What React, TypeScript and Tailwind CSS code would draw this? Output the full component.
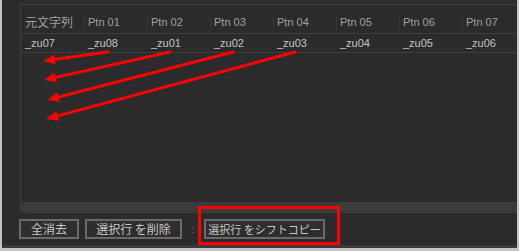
import React from "react";

const cols = ["元文字列", "Ptn 01", "Ptn 02", "Ptn 03", "Ptn 04", "Ptn 05", "Ptn 06", "Ptn 07"];
const row = ["_zu07", "_zu08", "_zu01", "_zu02", "_zu03", "_zu04", "_zu05", "_zu06"];

const font = { fontFamily: '"Liberation Sans", "Noto Sans CJK JP", sans-serif' };
const jp = { fontFamily: '"Noto Sans CJK JP", sans-serif' };

function Btn({ children, w, size }: { children: React.ReactNode; w: string; size: string }) {
  return (
    <div
      className={`${w} ${size} h-[20px] border-2 border-[#6a6a6a] bg-[#2e2e2e] text-[#c8c8c8] leading-none flex items-center justify-center whitespace-nowrap overflow-hidden`}
      style={jp}
    >
      {children}
    </div>
  );
}

export default function App() {
  const arrows = [
    [108, 52, 43, 61],
    [170, 52, 44, 80],
    [233, 52, 47, 100],
    [295, 52, 46, 119],
  ];
  return (
    <div className="relative w-[519px] h-[251px] bg-[#c4c4c4] pl-[2px] pr-[2px] pb-[3px]" style={font}>
      <div className="w-full h-full bg-[#2b2b2b] flex flex-col overflow-hidden">
        <div className="pt-[4px] pl-[18px] h-[213px] flex">
          <div className="flex-1 min-w-0 flex flex-col border-l border-t border-[#3e3e3e] overflow-hidden">
            <div className="h-[29px] flex border-b border-[#3e3e3e]">
              {cols.map((c, i) => (
                <div key={i} className="w-[63px] shrink-0 flex items-center pt-[6px] pl-[4px] relative text-[#a0a0a0]">
                  <span className={i === 0 ? "text-[12px]" : "text-[11px]"} style={i === 0 ? jp : font}>{c}</span>
                  {i > 0 && <div className="absolute left-0 top-[10px] h-[16px] w-px bg-[#363636]" />}
                </div>
              ))}
            </div>
            <div className="h-[19px] flex border-b border-[#3e3e3e]">
              {row.map((c, i) => (
                <div key={i} className="w-[63px] shrink-0 flex items-center pl-[4px] text-[11px] text-[#c4c4c4]">
                  {c}
                </div>
              ))}
            </div>
            <div className="flex-1" />
            <div className="h-[11px] bg-[#3b3b3b] rounded-l-[5px]" />
          </div>
        </div>
        <div className="pl-[17px] pt-[6px] flex items-center">
          <Btn w="w-[60px]" size="text-[12px]">全消去</Btn>
          <div className="w-[6px]" />
          <Btn w="w-[97px]" size="text-[12px]">選択行 を削除</Btn>
          <div className="w-[22px] text-[#777] text-[11px] flex justify-center">:</div>
          <Btn w="w-[121px]" size="text-[11px]">選択行 をシフトコピー</Btn>
        </div>
        <div className="flex-1" />
        <div className="h-[3px] bg-[#3a3a3a]" />
      </div>
      <div className="absolute left-[198px] top-[206px] w-[142px] h-[39px] border-[3px] border-[#ff0000]" />
      <svg className="absolute left-0 top-0" width="519" height="251">
        {arrows.map(([x1, y1, x2, y2], i) => {
          const dx = x2 - x1, dy = y2 - y1;
          const len = Math.hypot(dx, dy);
          const ux = dx / len, uy = dy / len;
          const bx = x2 - ux * 12, by = y2 - uy * 12;
          const px = -uy * 5, py = ux * 5;
          return (
            <g key={i}>
              <line x1={x1} y1={y1} x2={bx} y2={by} stroke="#ff0000" strokeWidth="3" strokeLinecap="round" />
              <polygon points={`${x2},${y2} ${bx + px},${by + py} ${bx - px},${by - py}`} fill="#ff0000" />
            </g>
          );
        })}
      </svg>
    </div>
  );
}
